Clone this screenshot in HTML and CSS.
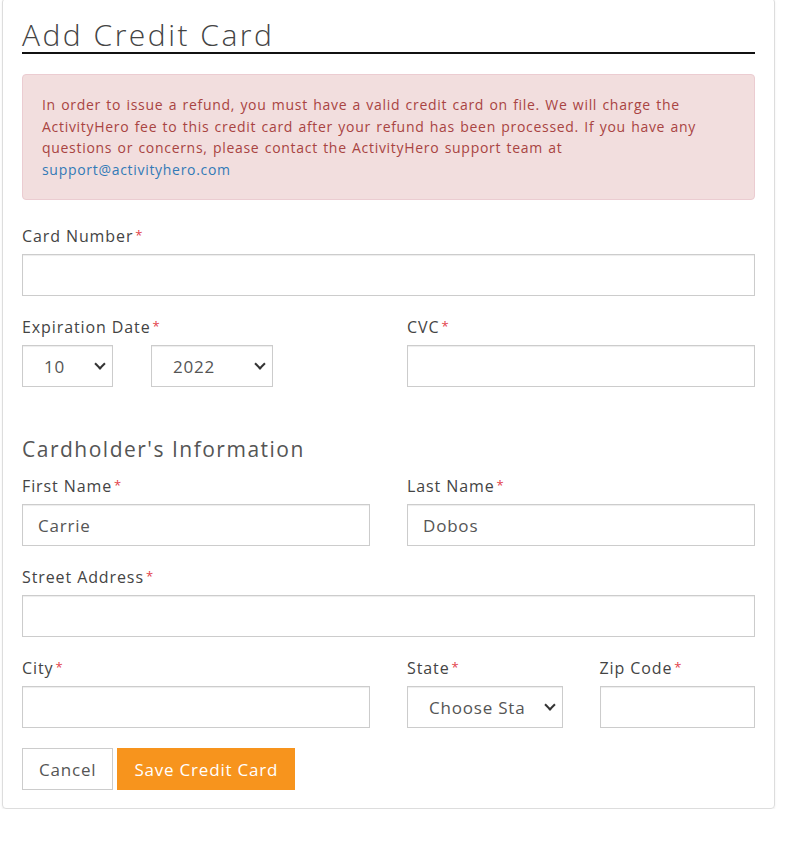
FILE: index.html
```html
<!DOCTYPE html>
<html lang="en">
<head>
<meta charset="utf-8">
<title>Add Credit Card</title>
<link rel="stylesheet" href="styles.css">
</head>
<body>
<div class="card">
  <h1 class="title">Add Credit Card</h1>
  <div class="alert">
    In order to issue a refund, you must have a valid credit card on file. We will charge the ActivityHero fee to this credit card after your refund has been processed. If you have any questions or concerns, please contact the ActivityHero support team at <a href="#">support@activityhero.com</a>
  </div>
  <form class="form">
    <div class="field">
      <label class="label">Card Number<span class="req">*</span></label>
      <input class="input" type="text">
    </div>
    <div class="row2">
      <div class="field">
        <label class="label">Expiration Date<span class="req">*</span></label>
        <div class="exp">
          <span class="select-wrap month"><select class="select"><option>10</option></select></span>
          <span class="select-wrap year"><select class="select"><option>2022</option></select></span>
        </div>
      </div>
      <div class="field">
        <label class="label">CVC<span class="req">*</span></label>
        <input class="input" type="text">
      </div>
    </div>
    <h2 class="section">Cardholder's Information</h2>
    <div class="row2">
      <div class="field">
        <label class="label">First Name<span class="req">*</span></label>
        <input class="input" type="text" value="Carrie">
      </div>
      <div class="field">
        <label class="label">Last Name<span class="req">*</span></label>
        <input class="input" type="text" value="Dobos">
      </div>
    </div>
    <div class="field">
      <label class="label">Street Address<span class="req">*</span></label>
      <input class="input" type="text">
    </div>
    <div class="row4">
      <div class="field city">
        <label class="label">City<span class="req">*</span></label>
        <input class="input" type="text">
      </div>
      <div class="field">
        <label class="label">State<span class="req">*</span></label>
        <span class="select-wrap"><select class="select"><option>Choose State</option></select></span>
      </div>
      <div class="field">
        <label class="label">Zip Code<span class="req">*</span></label>
        <input class="input" type="text">
      </div>
    </div>
    <div class="actions">
      <button type="button" class="btn">Cancel</button>
      <button type="button" class="btn btn-primary">Save Credit Card</button>
    </div>
  </form>
</div>
</body>
</html>
```
FILE: styles.css
```css
* { box-sizing: border-box; }

body {
  margin: 0;
  background: #fff;
  color: #444;
  font-family: "Open Sans", "Noto Sans", sans-serif;
}

.card {
  width: 773px;
  margin: -2px 0 0 2px;
  padding: 19px 19px 18px;
  border: 1px solid #ddd;
  border-radius: 4px;
  box-shadow: 0 1px 2px rgba(0, 0, 0, 0.08);
}

.title {
  margin: 0;
  font-size: 30px;
  font-weight: 300;
  line-height: 34px;
  letter-spacing: 2.5px;
  color: #444;
  border-bottom: 2px solid #111;
}

.alert {
  margin-top: 20px;
  padding: 19px;
  background: #f2dede;
  border: 1px solid #ebccd1;
  border-radius: 4px;
  color: #a94442;
  font-size: 14px;
  line-height: 21.5px;
  letter-spacing: 0.7px;
  word-spacing: 1px;
}

.alert a {
  color: #337ab7;
  text-decoration: none;
}

.form { margin-top: 25px; }

.field { margin-bottom: 20px; }

.label {
  display: block;
  margin-bottom: 7px;
  font-size: 16px;
  font-weight: 500;
  line-height: 22px;
  letter-spacing: 0.9px;
  color: #444;
}

.req {
  margin-left: 2px;
  color: #e2424a;
  font-size: 13px;
  line-height: 0;
  position: relative;
  top: -2px;
}

.input,
.select {
  display: block;
  width: 100%;
  height: 42px;
  margin: 0;
  border: 1px solid #ccc;
  border-radius: 0;
  background: #fff;
  box-shadow: inset 0 1px 1px rgba(0, 0, 0, 0.075);
  font-family: inherit;
  font-size: 17px;
  letter-spacing: 0.8px;
  color: #555;
}

.input { padding: 0 15px; }

.select {
  appearance: none;
  -webkit-appearance: none;
  padding: 0 38px 0 21px;
}

.select-wrap {
  position: relative;
  display: block;
}

.select-wrap::after {
  content: "";
  position: absolute;
  right: 9px;
  top: calc(50% - 2px);
  width: 6px;
  height: 6px;
  border-right: 2px solid #333;
  border-bottom: 2px solid #333;
  transform: translateY(-50%) rotate(45deg);
  pointer-events: none;
}

.row2 {
  display: grid;
  grid-template-columns: 1fr 1fr;
  column-gap: 37px;
}

.row4 {
  display: grid;
  grid-template-columns: repeat(4, 1fr);
  column-gap: 37px;
}

.city { grid-column: span 2; }

.exp {
  display: flex;
  gap: 38px;
}

.month { width: 91px; }
.year { width: 122px; }

.section {
  margin: 27px 0 11px;
  font-size: 21px;
  font-weight: 400;
  line-height: 30px;
  letter-spacing: 1.5px;
  color: #555;
}

.actions {
  display: flex;
  gap: 4px;
}

.btn {
  height: 42px;
  padding: 0 16px;
  border: 1px solid #ccc;
  border-radius: 0;
  background: #fff;
  color: #555;
  font-family: inherit;
  font-size: 17px;
  letter-spacing: 0.8px;
  cursor: pointer;
}

.btn-primary {
  background: #f7941d;
  border-color: #f7941d;
  color: #fff;
}
```
